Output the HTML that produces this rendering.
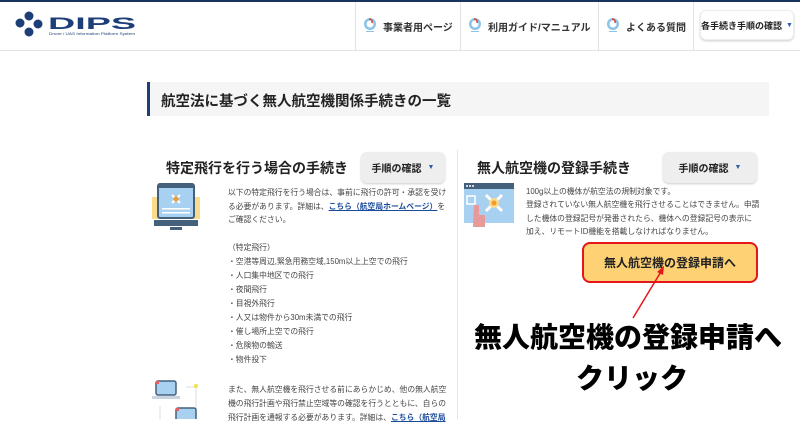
<!DOCTYPE html>
<html><head><meta charset="utf-8"><style>
*{margin:0;padding:0;box-sizing:border-box}
body{width:800px;height:419px;overflow:hidden;background:#fff;position:relative;font-family:"Liberation Sans","Noto Sans CJK JP",sans-serif;color:#222}
.a{position:absolute;white-space:nowrap}
.nav{font-size:10px;font-weight:bold;color:#333}
.btn{position:absolute;background:#eee;border-radius:6px;box-shadow:0 1px 2px rgba(0,0,0,.2);font-size:10px;font-weight:bold;color:#222;display:flex;align-items:center;justify-content:center}
.tri{color:#2c5fa8;font-size:7px;margin-left:6px}
.t{position:absolute;font-size:7.8px;color:#444;white-space:nowrap}
.lnk{color:#1a4b9b;text-decoration:underline;font-weight:bold}
.ic{position:absolute;width:14px;height:16px}
</style></head><body>
<div class="a" style="left:0;top:0;width:800px;height:2px;background:#17335e"></div>
<div class="a" style="left:0;top:50px;width:800px;height:1px;background:#e2e2e2"></div>
<!-- logo -->
<svg class="a" style="left:14px;top:10px" width="125" height="32" viewBox="0 0 125 32">
<circle cx="6" cy="13" r="4.5" fill="#1d3f78"/><circle cx="15" cy="6" r="4.5" fill="#1d3f78"/><circle cx="24" cy="14" r="4.5" fill="#1d3f78"/><circle cx="15" cy="22" r="4.5" fill="#1d3f78"/>
<text x="34" y="19" font-family="Liberation Sans" font-weight="bold" font-size="17" fill="#1d3f78" textLength="88" lengthAdjust="spacingAndGlyphs">DIPS</text>
<text x="35" y="25" font-family="Liberation Sans" font-size="3.6" fill="#1d3f78" textLength="86" lengthAdjust="spacingAndGlyphs">Drone / UAS Information Platform System</text>
</svg>
<!-- nav -->
<div class="a" style="left:355px;top:2px;width:1px;height:48px;background:#e2e2e2"></div>
<div class="a" style="left:460px;top:2px;width:1px;height:48px;background:#e2e2e2"></div>
<div class="a" style="left:598px;top:2px;width:1px;height:48px;background:#e2e2e2"></div>
<div class="a" style="left:693px;top:2px;width:1px;height:48px;background:#e2e2e2"></div>
<svg class="ic" style="left:363px;top:17px" viewBox="0 0 14 16"><circle cx="7" cy="7" r="6" fill="#8cc3ea"/><circle cx="7" cy="7" r="3.5" fill="#fff"/><path d="M6 2 A3 3 0 0 1 9 6" stroke="#e0412b" stroke-width="1.5" fill="none"/><rect x="3" y="14" width="8" height="1" fill="#8cc3ea"/></svg>
<div class="a nav" style="left:383px;top:19px">事業者用ページ</div>
<svg class="ic" style="left:468px;top:17px" viewBox="0 0 14 16"><circle cx="7" cy="7" r="6" fill="#8cc3ea"/><circle cx="7" cy="7" r="3.5" fill="#fff"/><path d="M6 2 A3 3 0 0 1 9 6" stroke="#e0412b" stroke-width="1.5" fill="none"/><rect x="3" y="14" width="8" height="1" fill="#8cc3ea"/></svg>
<div class="a nav" style="left:488px;top:19px">利用ガイド/マニュアル</div>
<svg class="ic" style="left:606px;top:17px" viewBox="0 0 14 16"><circle cx="7" cy="7" r="6" fill="#8cc3ea"/><circle cx="7" cy="7" r="3.5" fill="#fff"/><path d="M6 2 A3 3 0 0 1 9 6" stroke="#e0412b" stroke-width="1.5" fill="none"/><rect x="3" y="14" width="8" height="1" fill="#8cc3ea"/></svg>
<div class="a nav" style="left:626px;top:19px">よくある質問</div>
<div class="btn" style="left:700px;top:10px;width:94px;height:30px;background:#fff;font-size:9px;border:1px solid #eee">各手続き手順の確認<span class="tri" style="margin-left:4px">▼</span></div>
<!-- title -->
<div class="a" style="left:147px;top:82px;width:622px;height:34px;background:#f5f5f5;border-left:3px solid #1d3f78"></div>
<div class="a" style="left:161px;top:90px;font-size:14.5px;font-weight:bold;color:#222">航空法に基づく無人航空機関係手続きの一覧</div>
<!-- left card -->
<div class="a" style="left:166px;top:158px;font-size:14px;font-weight:bold">特定飛行を行う場合の手続き</div>
<div class="btn" style="left:361px;top:152px;width:84px;height:31px">手順の確認<span class="tri">▼</span></div>
<div class="a" style="left:457px;top:150px;width:1px;height:269px;background:#e4e4e4"></div>
<svg class="a" style="left:152px;top:182px" width="52" height="52" viewBox="0 0 52 52">
<rect x="0" y="15" width="48" height="22" fill="#f8dc8c"/>
<rect x="6" y="2" width="36" height="34" rx="2" fill="#a8d0f0" stroke="#44607a" stroke-width="2"/>
<rect x="6" y="2" width="36" height="4" fill="#44607a"/>
<path d="M20 13 L28 21 M28 13 L20 21" stroke="#fff" stroke-width="2"/><circle cx="24" cy="17" r="2.5" fill="#f29a2e"/>
<rect x="10" y="26" width="28" height="1.5" fill="#fff"/><rect x="10" y="30" width="28" height="1.5" fill="#fff"/>
<rect x="2" y="38" width="44" height="6" fill="#44607a"/><rect x="18" y="45" width="12" height="3" fill="#44607a"/>
</svg>
<div class="t" style="left:228px;top:186px;line-height:13.6px">以下の特定飛行を行う場合は、事前に飛行の許可・承認を受け<br>る必要があります。詳細は、<span class="lnk">こちら（航空局ホームページ）</span>を<br>ご確認ください。</div>
<div class="t" style="left:228px;top:241px;line-height:14px">（特定飛行）<br>・空港等周辺,緊急用務空域,150m以上上空での飛行<br>・人口集中地区での飛行<br>・夜間飛行<br>・目視外飛行<br>・人又は物件から30m未満での飛行<br>・催し場所上空での飛行<br>・危険物の輸送<br>・物件投下</div>
<div class="t" style="left:228px;top:383px;line-height:14px">また、無人航空機を飛行させる前にあらかじめ、他の無人航空<br>機の飛行計画や飛行禁止空域等の確認を行うとともに、自らの<br>飛行計画を通報する必要があります。詳細は、<span class="lnk">こちら（航空局</span></div>
<svg class="a" style="left:152px;top:378px" width="50" height="41" viewBox="0 0 50 41">
<path d="M34 9 H44 V41" stroke="#ddd" fill="none"/><circle cx="44" cy="8" r="2" fill="#f5e04a"/>
<path d="M8 28 V41" stroke="#ddd"/>
<rect x="4" y="3" width="20" height="14" rx="2" fill="#a8d0f0" stroke="#44607a" stroke-width="1.5"/><rect x="4" y="3" width="3" height="3" fill="#e06060"/>
<rect x="0" y="18" width="28" height="3" fill="#c8d4e0"/>
<rect x="24" y="30" width="20" height="14" rx="2" fill="#a8d0f0" stroke="#44607a" stroke-width="1.5"/><rect x="24" y="30" width="3" height="3" fill="#e06060"/>
</svg>
<!-- right card -->
<div class="a" style="left:477px;top:158px;font-size:14px;font-weight:bold">無人航空機の登録手続き</div>
<div class="btn" style="left:663px;top:152px;width:94px;height:31px">手順の確認<span class="tri">▼</span></div>
<svg class="a" style="left:464px;top:183px" width="50" height="46" viewBox="0 0 50 46">
<rect x="0" y="0" width="50" height="40" fill="#a8d0f0"/><rect x="0" y="0" width="50" height="6" fill="#44607a"/>
<circle cx="3" cy="3" r="1" fill="#fff"/><circle cx="6" cy="3" r="1" fill="#fff"/><circle cx="9" cy="3" r="1" fill="#fff"/>
<path d="M22 12 L38 28 M38 12 L22 28" stroke="#fff" stroke-width="3"/><circle cx="30" cy="20" r="5" fill="#f8dc8c"/><circle cx="30" cy="20" r="2.5" fill="#f29a2e"/>
<rect x="3" y="13" width="8" height="8" fill="none" stroke="#fff" stroke-width="1.5"/>
<path d="M10 22 h5 v10 h6 v12 h-12 z" fill="#e79a9a"/>
</svg>
<div class="t" style="left:526px;top:185px;line-height:13.4px">100g以上の機体が航空法の規制対象です。<br>登録されていない無人航空機を飛行させることはできません。申請<br>した機体の登録記号が発番されたら、機体への登録記号の表示に<br>加え、リモートID機能を搭載しなければなりません。</div>
<div class="a" style="left:582px;top:242px;width:176px;height:41px;background:#fdd174;border:2px solid #e4161b;border-radius:8px;display:flex;align-items:center;justify-content:center;font-size:12px;font-weight:bold;color:#222">無人航空機の登録申請へ</div>
<svg class="a" style="left:620px;top:260px" width="60" height="65" viewBox="0 0 60 65">
<line x1="13" y1="58" x2="42" y2="10" stroke="#e4161b" stroke-width="1.5"/>
<path d="M44 6 L37 12 L43 15 Z" fill="#e4161b"/>
</svg>
<div class="a" style="left:474px;top:316px;font-size:28px;font-weight:900;color:#000">無人航空機の登録申請へ</div>
<div class="a" style="left:576px;top:357px;font-size:28px;font-weight:900;color:#000">クリック</div>
</body></html>
